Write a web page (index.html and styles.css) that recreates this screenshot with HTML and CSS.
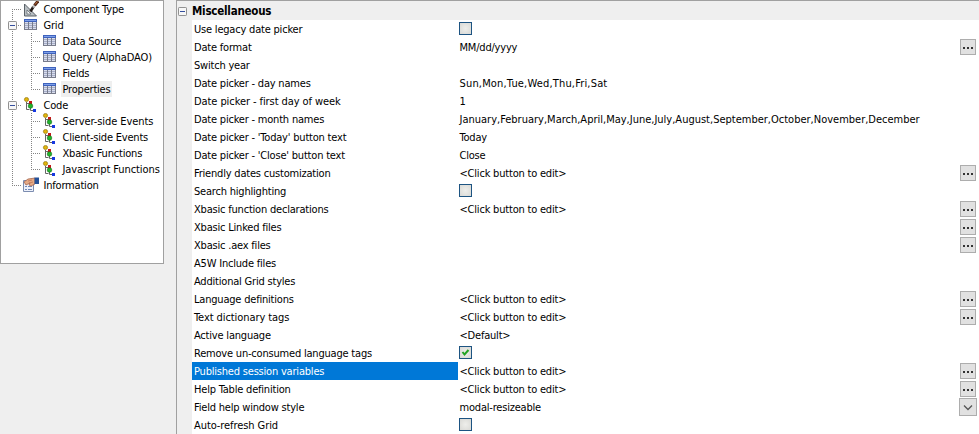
FILE: index.html
```html
<!DOCTYPE html>
<html lang="en">
<head>
<meta charset="utf-8">
<title>Component properties</title>
<link rel="stylesheet" href="styles.css">
</head>
<body>
<svg class="defs" aria-hidden="true">
  <symbol id="table" viewBox="0 0 16 16">
    <path d="M1 2h13v11H1z" fill="#787c8c"/>
    <path d="M1 2h13v3H1z" fill="#3e62bd"/><path d="M2 3h11v1H2z" fill="#7d9fe8"/>
    <path d="M2 5h3v7H2zM6 5h3v7H6zM10 5h3v7h-3z" fill="#d9ddec"/>
    <path d="M2 6.500h3M6 6.500h3M10 6.500h3M2 8.500h3M6 8.500h3M10 8.500h3M2 10.500h3M6 10.500h3M10 10.500h3" stroke="#a5adc8"/>
  </symbol>
  <symbol id="code" viewBox="0 0 16 16">
    <path d="M3.500 5v7.500h3M3.500 6.500h3M7.500 10v3.500h3" fill="none" stroke="#666"/>
    <path d="M6 4h3v4H6z" fill="#c41818"/>
    <circle cx="3.500" cy="2.500" r="2.100" fill="#e0b40c" stroke="#866900" stroke-width=".6"/>
    <circle cx="7.500" cy="9" r="2.300" fill="#20b52b" stroke="#126c18" stroke-width=".6"/>
    <path d="M10 12h3v3h-3z" fill="#1738e0"/>
  </symbol>
  <symbol id="design" viewBox="0 0 16 16">
    <path d="M1.500 3v12h12z" fill="#b8bec2" stroke="#5b6268"/>
    <path d="M4 9v4h4z" fill="#fff" stroke="#656c72" stroke-width=".8"/>
    <path d="M7.500 10.500l3-5" stroke="#241d1b" stroke-width="2.600"/>
    <path d="M10 6.500l2-3" stroke="#bbb" stroke-width="2.200"/>
    <path d="M11.500 4.500L15 0" stroke="#51291b" stroke-width="3"/>
    <path d="M12 3.500L14.500.5" stroke="#c7743a"/>
  </symbol>
  <symbol id="info" viewBox="0 0 16 16">
    <path d="M.5 3.500h10v11H.5z" fill="#edf1fb" stroke="#7c8db0"/>
    <path d="M2 9h2v1H2zM2 12h2v1H2zM5 9h4v1H5zM5 12h4v1H5z" fill="#7088b8"/>
    <path d="M1 5l4-3 7-1v6l-4 2-2-1 1-2-4 2z" fill="#e5aa86" stroke="#9c5941" stroke-width=".7"/>
    <path d="M5 4l4-1M6 6l4-1" stroke="#b76f51" stroke-width=".7"/>
    <path d="M11.500.5H16v6.500h-4.500z" fill="#255199"/>
  </symbol>
  <symbol id="minus" viewBox="0 0 9 9">
    <rect x=".5" y=".5" width="8" height="8" rx=".7" fill="#f7f7f7" stroke="#919191"/>
    <path d="M2 4.500h5" stroke="#354f9e"/>
  </symbol>
</svg>
<div class="app">
  <nav class="tree">
    <div class="node"><i class="guide first"></i><svg class="icon"><use href="#design"/></svg><span>Component Type</span></div>
    <div class="node"><i class="guide"><svg class="toggle"><use href="#minus"/></svg></i><svg class="icon"><use href="#table"/></svg><span>Grid</span></div>
    <div class="node"><i class="guide pass"></i><i class="guide"></i><svg class="icon"><use href="#table"/></svg><span>Data Source</span></div>
    <div class="node"><i class="guide pass"></i><i class="guide"></i><svg class="icon"><use href="#table"/></svg><span class="loose">Query (AlphaDAO)</span></div>
    <div class="node"><i class="guide pass"></i><i class="guide"></i><svg class="icon"><use href="#table"/></svg><span>Fields</span></div>
    <div class="node"><i class="guide pass"></i><i class="guide last"></i><svg class="icon"><use href="#table"/></svg><span class="current">Properties</span></div>
    <div class="node"><i class="guide"><svg class="toggle"><use href="#minus"/></svg></i><svg class="icon"><use href="#code"/></svg><span>Code</span></div>
    <div class="node"><i class="guide pass"></i><i class="guide"></i><svg class="icon"><use href="#code"/></svg><span class="loose">Server-side Events</span></div>
    <div class="node"><i class="guide pass"></i><i class="guide"></i><svg class="icon"><use href="#code"/></svg><span>Client-side Events</span></div>
    <div class="node"><i class="guide pass"></i><i class="guide"></i><svg class="icon"><use href="#code"/></svg><span>Xbasic Functions</span></div>
    <div class="node"><i class="guide pass"></i><i class="guide last"></i><svg class="icon"><use href="#code"/></svg><span class="loose">Javascript Functions</span></div>
    <div class="node"><i class="guide last"></i><svg class="icon"><use href="#info"/></svg><span>Information</span></div>
  </nav>
  <main class="props">
    <header class="group"><svg class="toggle"><use href="#minus"/></svg><b>Miscellaneous</b></header>
    <div class="rows">
      <div class="row"><span class="name">Use legacy date picker</span><i class="check"></i></div>
      <div class="row"><span class="name">Date format</span><span class="value">MM/dd/yyyy</span><i class="more"></i></div>
      <div class="row"><span class="name">Switch year</span></div>
      <div class="row"><span class="name">Date picker - day names</span><span class="value days">Sun,Mon,Tue,Wed,Thu,Fri,Sat</span></div>
      <div class="row"><span class="name loose">Date picker - first day of week</span><span class="value">1</span></div>
      <div class="row"><span class="name">Date picker - month names</span><span class="value months">January,February,March,April,May,June,July,August,September,October,November,December</span></div>
      <div class="row"><span class="name">Date picker - 'Today' button text</span><span class="value">Today</span></div>
      <div class="row"><span class="name">Date picker - 'Close' button text</span><span class="value">Close</span></div>
      <div class="row"><span class="name">Friendly dates customization</span><span class="value">&lt;Click button to edit&gt;</span><i class="more"></i></div>
      <div class="row"><span class="name">Search highlighting</span><i class="check"></i></div>
      <div class="row"><span class="name">Xbasic function declarations</span><span class="value">&lt;Click button to edit&gt;</span><i class="more"></i></div>
      <div class="row"><span class="name">Xbasic Linked files</span><i class="more"></i></div>
      <div class="row"><span class="name">Xbasic .aex files</span><i class="more"></i></div>
      <div class="row"><span class="name">A5W Include files</span></div>
      <div class="row"><span class="name">Additional Grid styles</span></div>
      <div class="row"><span class="name">Language definitions</span><span class="value">&lt;Click button to edit&gt;</span><i class="more"></i></div>
      <div class="row"><span class="name loose">Text dictionary tags</span><span class="value">&lt;Click button to edit&gt;</span><i class="more"></i></div>
      <div class="row"><span class="name">Active language</span><span class="value">&lt;Default&gt;</span></div>
      <div class="row"><span class="name">Remove un-consumed language tags</span><i class="check"><svg viewBox="0 0 11 11"><path d="M2.500 5l2 2.500L8.500 3" fill="none" stroke="#23a323" stroke-width="2"/></svg></i></div>
      <div class="row"><span class="name selected">Published session variables</span><span class="value">&lt;Click button to edit&gt;</span><i class="more"></i></div>
      <div class="row"><span class="name">Help Table definition</span><span class="value">&lt;Click button to edit&gt;</span><i class="more"></i></div>
      <div class="row"><span class="name">Field help window style</span><span class="value">modal-resizeable</span><i class="drop"><svg viewBox="0 0 16 16"><path d="M4 6.500l4 4 4-4" fill="none" stroke="#555" stroke-width="1.300"/></svg></i></div>
      <div class="row"><span class="name loose">Auto-refresh Grid</span><i class="check"></i></div>
    </div>
  </main>
</div>
</body>
</html>
```
FILE: styles.css
```css
* { box-sizing: border-box; }
body {
  margin: 0;
  background: #efefef;
  color: #000;
  font: 11px/16px "DejaVu Sans Condensed", "DejaVu Sans", sans-serif;
  font-stretch: condensed;
  letter-spacing: -0.2px;
  overflow: hidden;
}
.defs { display: none; }
.app { display: flex; align-items: flex-start; gap: 12px; width: 979px; height: 434px; }
.tree { flex: none; width: 164px; height: 264px; padding-left: 2px; background: #fff; border: 1px solid #a0a0a0; }
.node { display: flex; height: 16px; white-space: nowrap; }
.node span { height: 16px; padding: 0 2px 0 1.5px; line-height: 18px; }
.node .current { background: #efefef; }
.loose { letter-spacing: -0.08px; }
.icon { flex: none; width: 16px; height: 16px; margin: 0 3px 0 1px; }
.guide {
  flex: none;
  width: 19px;
  height: 16px;
  background:
    repeating-linear-gradient(#848484 0 1px, transparent 1px 2px) 9px 0 / 1px 16px no-repeat,
    repeating-linear-gradient(90deg, #848484 0 1px, transparent 1px 2px) 9px 8px / 10px 1px no-repeat;
}
.guide.first { background-position: 9px 8px, 9px 8px; }
.guide.last { background-size: 1px 9px, 10px 1px; }
.guide.pass { background-size: 1px 16px, 0 0; }
.node:nth-child(n+3):nth-child(-n+6) .guide.pass,
.node:nth-child(n+8):nth-child(-n+11) .guide.pass { background-size: 1px 16px, 0 0; }
.toggle { display: block; width: 9px; height: 9px; }
.guide .toggle { margin: 4px 0 0 5px; }
.props { flex: none; width: 803px; height: 434px; border: solid #a0a0a0; border-width: 1px 0 0 1px; overflow: hidden; }
.group { display: flex; align-items: center; gap: 5px; height: 19px; padding: 1px 0 0 1px; font-size: 11.5px; letter-spacing: -0.23px; }
.rows { margin-left: 15px; background: #fff; }
.row { display: flex; align-items: center; height: 18px; line-height: 20px; white-space: nowrap; }
.name { flex: none; width: 266px; height: 18px; padding-left: 2px; }
.selected { background: #0078d7; color: #fff; }
.value { height: 18px; padding-left: 1.5px; }
.days { letter-spacing: 0.17px; }
.months { letter-spacing: 0; }
.check { width: 13px; height: 13px; margin: -1px 0 0 1px; border: 1px solid #1d5482; background: radial-gradient(#eeeeeb, #d9d9d5); }
.check svg { display: block; width: 11px; height: 11px; }
.more { display: flex; justify-content: center; width: 16px; height: 16px; margin: 0 3px 0 auto; border: 1px solid #adadad; background: #e1e1e1; }
.more::before { content: ""; width: 10px; height: 2px; margin-top: 7px; background: repeating-linear-gradient(90deg, #333 0 2px, transparent 2px 4px); }
.drop { width: 18px; height: 18px; margin: 0 2px 0 auto; border: 1px solid #adadad; background: #e1e1e1; }
.drop svg { display: block; width: 16px; height: 16px; }
```
